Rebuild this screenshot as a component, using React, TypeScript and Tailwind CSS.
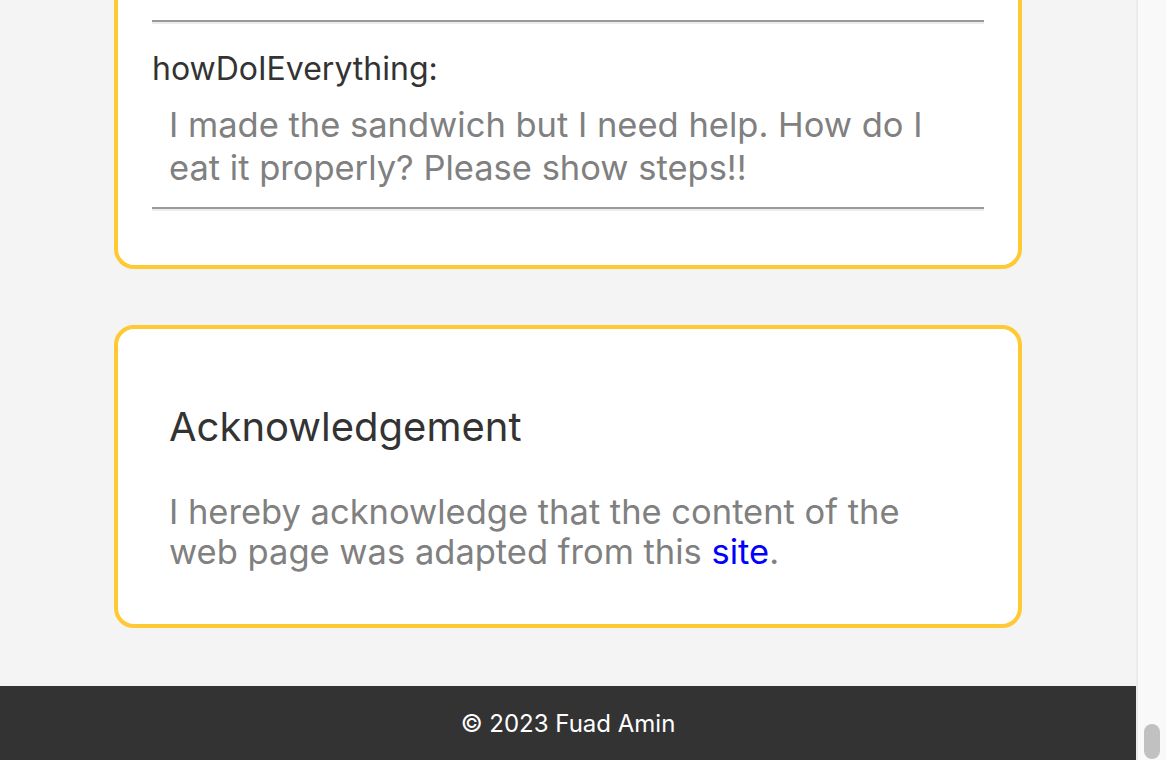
import React from "react";

export default function App() {
  return (
    <div
      className="flex h-[760px] w-[1166px] overflow-hidden bg-[#f4f4f4]"
      style={{ fontFamily: "Inter, 'Noto Sans', sans-serif" }}
    >
      <div className="flex w-[1136px] flex-col items-center">
        {/* Card 1 (top cut off by scroll) */}
        <div className="w-[908px] rounded-b-[20px] border-x-4 border-b-4 border-[#ffc933] bg-white px-[34px] pb-[54px] pt-[20px]">
          <div className="border-t-2 border-b-2 border-t-[#9a9a9a] border-b-[#ececec]" />
          <div className="mt-[25px] text-[32px] leading-[39px] text-[#333333]">howDoIEverything:</div>
          <p className="ml-[17px] mt-[15px] text-[34.5px] leading-[43px] text-[#808080]">
            I made the sandwich but I need help. How do I<br />
            eat it properly? Please show steps!!
          </p>
          <div className="mt-[18px] border-t-2 border-b-2 border-t-[#9a9a9a] border-b-[#ececec]" />
        </div>

        {/* Card 2 */}
        <div className="mt-[56px] w-[908px] rounded-[20px] border-4 border-[#ffc933] bg-white px-[51px] pb-[52px] pt-[74px]">
          <h3 className="text-[40px] leading-[48px] text-[#333333]">Acknowledgement</h3>
          <p className="mt-[41px] text-[34.5px] leading-[40px] text-[#808080]">
            I hereby acknowledge that the content of the<br />
            web page was adapted from this <a href="#" className="text-[#0000ff]">site</a>.
          </p>
        </div>

        {/* Footer */}
        <div className="mt-[58px] flex h-[74px] w-full shrink-0 items-center justify-center bg-[#333333] pt-[2px] text-[24px] text-white">
          © 2023 Fuad Amin
        </div>
      </div>

      {/* Fake scrollbar */}
      <div className="relative h-full w-[30px] border-l-2 border-[#ebebeb] bg-[#f9f9f9]">
        <div className="absolute left-[6px] top-[724px] h-[35px] w-[16px] rounded-full bg-[#c1c1c1]" />
      </div>
    </div>
  );
}
